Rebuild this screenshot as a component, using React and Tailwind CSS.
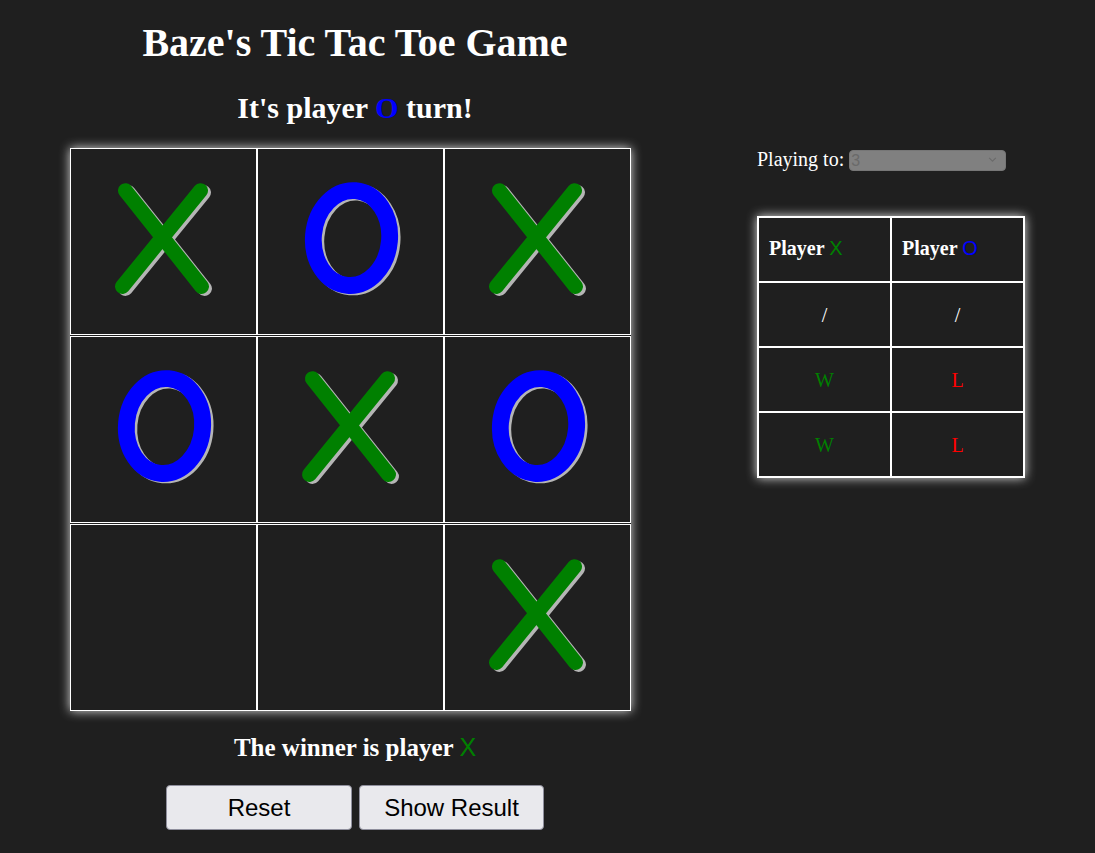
import React from "react";

const board = ["X", "O", "X", "O", "X", "O", "", "", "X"];

const scores = [
  { x: "/", o: "/" },
  { x: "W", o: "L" },
  { x: "W", o: "L" }
];

const resultColor = {
  "/": "text-white",
  W: "text-[#008000]",
  L: "text-[#ff0000]"
};

const Mark = ({ value }) => {
  if (value === "X") {
    return (
      <svg viewBox="0 0 187 187" className="w-full h-full" role="img" aria-label="X">
        <g transform="translate(3 2)" stroke="#b5b5b5" strokeWidth="15" strokeLinecap="round">
          <line x1="55" y1="42" x2="132" y2="139" />
          <line x1="131" y1="42" x2="52" y2="139" />
        </g>
        <g stroke="#008000" strokeWidth="15" strokeLinecap="round">
          <line x1="55" y1="42" x2="132" y2="139" />
          <line x1="131" y1="42" x2="52" y2="139" />
        </g>
      </svg>
    );
  }
  if (value === "O") {
    return (
      <svg viewBox="0 0 187 187" className="w-full h-full" role="img" aria-label="O">
        <ellipse cx="97" cy="91.5" rx="38.5" ry="48" fill="none" stroke="#b5b5b5" strokeWidth="17" transform="rotate(5 97 91.5)" />
        <ellipse cx="94.5" cy="90" rx="38.5" ry="48" fill="none" stroke="#0000ff" strokeWidth="17" transform="rotate(5 94.5 90)" />
      </svg>
    );
  }
  return null;
};

const App = () => {
  return (
    <div className="min-h-[853px] bg-[#1f1f1f] text-white flex font-['Liberation_Serif',serif]">
      {/* game column */}
      <div className="w-[710px] flex flex-col items-center">
        <h1 className="pt-[23px] text-[40px] leading-[40px] font-bold">Baze's Tic Tac Toe Game</h1>
        <h2 className="mt-[30px] text-[30px] leading-[30px] font-bold">
          It's player <span className="text-[#0000ff]">O</span> turn!
        </h2>

        <div className="mt-[25px] mr-[9px] grid grid-cols-[repeat(3,187px)] gap-y-[1px] shadow-[0_0_10px_rgba(255,255,255,0.85)]">
          {board.map((cell, i) => (
            <div key={i} className="w-[187px] h-[187px] border border-white bg-[#1f1f1f]">
              <Mark value={cell} />
            </div>
          ))}
        </div>

        <h3 className="mt-[24px] text-[25px] leading-[25px] font-bold">
          The winner is player{" "}
          <span className="font-['Liberation_Sans',sans-serif] font-normal text-[#008000]">X</span>
        </h3>

        <div className="mt-[25px] flex gap-[7px] font-['Liberation_Sans',sans-serif]">
          <button className="w-[186px] h-[45px] rounded-[4px] border border-[#8f8f9d] bg-[#e9e9ed] text-black text-[24px]">
            Reset
          </button>
          <button className="w-[185px] h-[45px] rounded-[4px] border border-[#8f8f9d] bg-[#e9e9ed] text-black text-[24px]">
            Show Result
          </button>
        </div>
      </div>

      {/* score column */}
      <div className="pl-[47px] pt-[150px]">
        <div className="flex items-center h-[21px] gap-[5px]">
          <span className="text-[20px] leading-[21px] -mt-[2px]">Playing to:</span>
          <div className="relative">
            <select
              disabled
              defaultValue="3"
              className="appearance-none w-[157px] h-[21px] rounded-[4px] border border-[#767676] bg-[#808080] text-[#6a6a6a] text-[16px] leading-[19px] pl-[1px] font-['Liberation_Sans',sans-serif]"
            >
              <option value="3">3</option>
            </select>
            <svg viewBox="0 0 10 6" className="absolute right-[9px] top-[8px] w-[9px] h-[5px]" fill="none" stroke="#6a6a6a" strokeWidth="1.3">
              <path d="M1 1l4 4 4-4" />
            </svg>
          </div>
        </div>

        <table className="mt-[45px] w-[268px] table-fixed border-separate border-spacing-0 border border-white shadow-[0_0_10px_rgba(255,255,255,0.85)]">
          <thead>
            <tr>
              <th className="w-[133px] h-[65px] border border-white text-left pl-[10px] pb-[3px] text-[20px] font-bold">
                Player <span className="font-['Liberation_Sans',sans-serif] font-normal text-[#008000]">X</span>
              </th>
              <th className="h-[65px] border border-white text-left pl-[10px] pb-[3px] text-[20px] font-bold">
                Player <span className="font-['Liberation_Sans',sans-serif] font-normal text-[#0000ff]">O</span>
              </th>
            </tr>
          </thead>
          <tbody>
            {scores.map((row, i) => (
              <tr key={i}>
                <td className={`h-[65px] border border-white text-center text-[20px] ${resultColor[row.x]}`}>{row.x}</td>
                <td className={`h-[65px] border border-white text-center text-[20px] ${resultColor[row.o]}`}>{row.o}</td>
              </tr>
            ))}
          </tbody>
        </table>
      </div>
    </div>
  );
};

export default App;
